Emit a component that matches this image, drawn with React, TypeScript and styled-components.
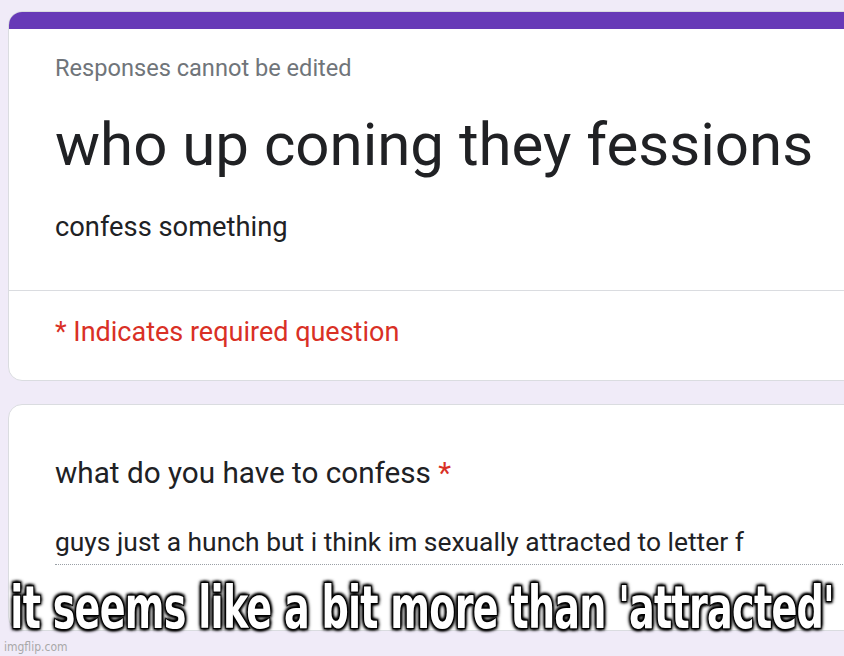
import React from 'react';
import styled, { createGlobalStyle } from 'styled-components';

const GlobalStyle = createGlobalStyle`
  html, body {
    margin: 0;
    padding: 0;
    background: #f0ebf8;
    overflow: hidden;
  }
  body {
    font-family: Roboto, "Noto Sans", Arial, sans-serif;
  }
`;

const Page = styled.div`
  position: relative;
  width: 844px;
  height: 656px;
  overflow: hidden;
  background: #f0ebf8;
`;

const Column = styled.div`
  display: flex;
  flex-direction: column;
  gap: 23px;
  padding: 11px 0 0 8px;
  width: 880px;
`;

const Card = styled.div<{ $height: number }>`
  box-sizing: border-box;
  height: ${(p) => p.$height}px;
  background: #fff;
  border: 1px solid #dadce0;
  border-radius: 14px;
  overflow: hidden;
  display: flex;
  flex-direction: column;
`;

const AccentBar = styled.div`
  height: 18px;
  margin: -1px -1px 0;
  background: #673ab7;
`;

const Section = styled.div<{ $pt: number; $pb: number; $divider?: boolean }>`
  padding: ${(p) => p.$pt}px 0 ${(p) => p.$pb}px 46px;
  border-bottom: ${(p) => (p.$divider ? '1px solid #dadce0' : 'none')};
`;

const Notice = styled.div`
  font-size: 23.6px;
  line-height: 28px;
  color: #70757a;
`;

const Title = styled.div`
  margin-top: 31px;
  font-size: 60px;
  line-height: 64px;
  color: #202124;
  white-space: nowrap;
`;

const Description = styled.div`
  margin-top: 34px;
  font-size: 27.3px;
  line-height: 32px;
  color: #202124;
`;

const Required = styled.div`
  font-size: 27px;
  line-height: 32px;
  color: #d93025;
`;

const Question = styled.div`
  font-size: 29.7px;
  line-height: 36px;
  color: #202124;
  white-space: nowrap;
`;

const Star = styled.span`
  color: #d93025;
`;

const Answer = styled.div`
  margin-top: 35px;
  padding-bottom: 6px;
  font-size: 26.4px;
  line-height: 32px;
  color: #202124;
  border-bottom: 1px dotted #9aa0a6;
  white-space: nowrap;
`;

const Watermark = styled.div`
  padding: 11px 0 0 4px;
  font-family: "Liberation Sans Narrow", "DejaVu Sans Condensed", "Liberation Sans", sans-serif;
  font-size: 12px;
  line-height: 10px;
  color: #a8a8a8;
`;

const Caption = styled.div`
  position: absolute;
  left: 0;
  right: 0;
  top: 583px;
  display: flex;
  justify-content: center;
`;

const CaptionText = styled.span`
  display: inline-block;
  transform: scaleX(0.73);
  transform-origin: center;
  font-family: Impact, "Liberation Sans Narrow", "DejaVu Sans Condensed", "Liberation Sans", sans-serif;
  font-weight: 700;
  font-size: 58px;
  line-height: 50px;
  letter-spacing: -1px;
  color: #fff;
  white-space: nowrap;
  -webkit-text-stroke: 2px #000;
  paint-order: stroke fill;
  text-shadow:
    2px 2px 3px #000,
    -2px -2px 3px #000,
    2px -2px 3px #000,
    -2px 2px 3px #000,
    0 0 6px #000;
`;

export default function App() {
  return (
    <Page>
      <GlobalStyle />
      <Column>
        <Card $height={370}>
          <AccentBar />
          <Section $pt={25} $pb={47} $divider>
            <Notice>Responses cannot be edited</Notice>
            <Title>who up coning they fessions</Title>
            <Description>confess something</Description>
          </Section>
          <Section $pt={25} $pb={0}>
            <Required>* Indicates required question</Required>
          </Section>
        </Card>
        <Card $height={227}>
          <Section $pt={50} $pb={0}>
            <Question>
              what do you have to confess <Star>*</Star>
            </Question>
            <Answer>guys just a hunch but i think im sexually attracted to letter f</Answer>
          </Section>
        </Card>
      </Column>
      <Watermark>imgflip.com</Watermark>
      <Caption>
        <CaptionText>it seems like a bit more than 'attracted'</CaptionText>
      </Caption>
    </Page>
  );
}
